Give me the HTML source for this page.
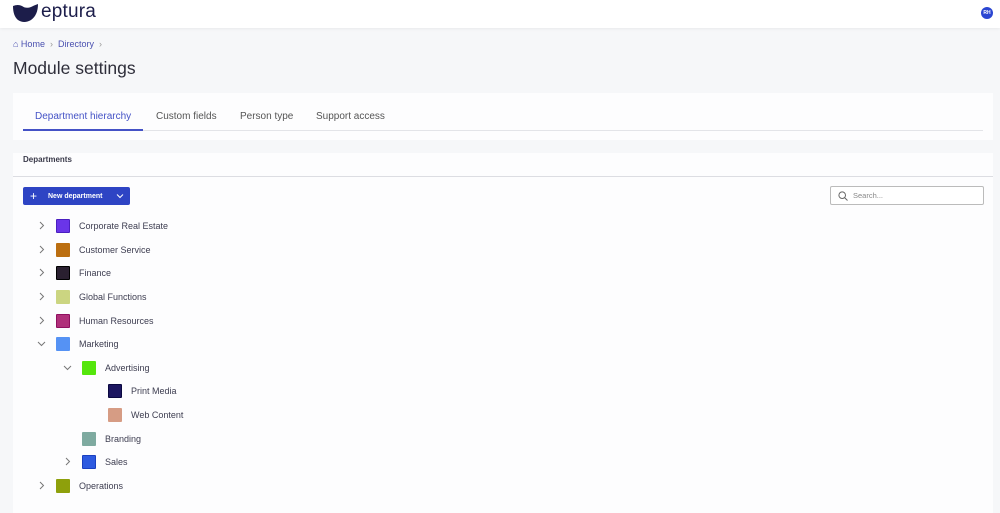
<!DOCTYPE html>
<html><head><meta charset="utf-8"><style>
*{margin:0;padding:0;box-sizing:border-box}
body{width:1000px;height:509px;overflow:hidden;background:#f6f7f9;font-family:"Liberation Sans",sans-serif;color:#3a3a4a;position:relative}
.a{position:absolute;white-space:nowrap}
.hdr{left:0;top:0;width:1000px;height:28px;background:#fff;box-shadow:0 1px 3px rgba(0,0,0,.06)}
.row{position:absolute;height:16px;font-size:9px;color:#3d3d50;line-height:16px;white-space:nowrap}
.sq{position:absolute;width:14px;height:14px;border-radius:1px;top:1px}
.chev{position:absolute;top:3px}
</style></head><body>
<div class="a hdr">
<svg class="a" style="left:12px;top:3px" width="27" height="20" viewBox="0 0 27 20"><path d="M1 3 Q6 1 10 3 Q14 6 19 4 Q23 2 26 1 Q26 12 19 17 Q12 21 6 17 Q1 13 1 3Z" fill="#1c1d4a"/></svg>
<div class="a" style="left:41px;top:1px;font-size:19px;color:#1c1d4a;letter-spacing:.2px">eptura</div>
<div class="a" style="left:981px;top:7px;width:12px;height:12px;border-radius:50%;background:#2b46d2;color:#fff;font-size:5px;font-weight:bold;text-align:center;line-height:12px">RH</div>
</div>
<div class="a" style="left:13px;top:39px;font-size:9px;color:#4a50b0">⌂ Home &nbsp;<span style="color:#999">›</span>&nbsp; Directory &nbsp;<span style="color:#999">›</span></div>
<div class="a" style="left:13px;top:58px;font-size:17.5px;color:#2e2e3a">Module settings</div>
<div class="a" style="left:13px;top:93px;width:980px;height:47px;background:#fdfdfe"></div>
<div class="a" style="left:23px;top:130px;width:960px;height:1px;background:#e3e4e8"></div>
<div class="a" style="left:23px;top:129px;width:120px;height:2px;background:#4452c6"></div>
<div class="a" style="left:35px;top:111px;font-size:10px;color:#4452c6">Department hierarchy</div>
<div class="a" style="left:156px;top:111px;font-size:10px;color:#555">Custom fields</div>
<div class="a" style="left:240px;top:111px;font-size:10px;color:#555">Person type</div>
<div class="a" style="left:316px;top:111px;font-size:10px;color:#555">Support access</div>
<div class="a" style="left:13px;top:153px;width:980px;height:360px;background:#fdfdfe"></div>
<div class="a" style="left:13px;top:176px;width:980px;height:1px;background:#dcdde2"></div>
<div class="a" style="left:23px;top:155px;font-size:8px;font-weight:bold;color:#3a3a4a">Departments</div>
<div class="a" style="left:23px;top:187px;width:107px;height:18px;background:#2e44c4;border-radius:2px;color:#fff;font-size:7px;font-weight:bold">
<span class="a" style="left:7px;top:1px;font-size:12px;font-weight:normal;line-height:16px">+</span><span class="a" style="left:25px;top:5px;line-height:9px">New department</span>
<svg class="a" style="left:93px;top:6px" width="8" height="6" viewBox="0 0 8 6"><path d="M1 1.5L4 4.5L7 1.5" stroke="#fff" fill="none"/></svg></div>
<div class="a" style="left:830px;top:186px;width:154px;height:19px;border:1px solid #bbb;border-radius:2px;background:#fff">
<svg class="a" style="left:7px;top:4px" width="10" height="10" viewBox="0 0 10 10"><circle cx="4.2" cy="4.2" r="3.3" stroke="#666" fill="none"/><path d="M6.6 6.6L9.5 9.5" stroke="#666"/></svg>
<span class="a" style="left:22px;top:4px;font-size:7.5px;color:#888">Search...</span></div>

<div class="row" style="left:0;top:218px"><svg class="chev" style="left:39px" width="6" height="9" viewBox="0 0 6 9"><path d="M1 1L4.5 4.5L1 8" stroke="#777" fill="none"/></svg><div class="sq" style="left:56px;background:#6a35e8;border:1px solid #4a1fc0"></div><span class="a" style="left:79px">Corporate Real Estate</span></div>
<div class="row" style="left:0;top:242px"><svg class="chev" style="left:39px" width="6" height="9" viewBox="0 0 6 9"><path d="M1 1L4.5 4.5L1 8" stroke="#777" fill="none"/></svg><div class="sq" style="left:56px;background:#bb6e10"></div><span class="a" style="left:79px">Customer Service</span></div>
<div class="row" style="left:0;top:265px"><svg class="chev" style="left:39px" width="6" height="9" viewBox="0 0 6 9"><path d="M1 1L4.5 4.5L1 8" stroke="#777" fill="none"/></svg><div class="sq" style="left:56px;background:#2a2030;border:1px solid #000"></div><span class="a" style="left:79px">Finance</span></div>
<div class="row" style="left:0;top:289px"><svg class="chev" style="left:39px" width="6" height="9" viewBox="0 0 6 9"><path d="M1 1L4.5 4.5L1 8" stroke="#777" fill="none"/></svg><div class="sq" style="left:56px;background:#cbd581"></div><span class="a" style="left:79px">Global Functions</span></div>
<div class="row" style="left:0;top:313px"><svg class="chev" style="left:39px" width="6" height="9" viewBox="0 0 6 9"><path d="M1 1L4.5 4.5L1 8" stroke="#777" fill="none"/></svg><div class="sq" style="left:56px;background:#b0307a;border:1px solid #901060"></div><span class="a" style="left:79px">Human Resources</span></div>
<div class="row" style="left:0;top:336px"><svg class="chev" style="left:37px;top:5px" width="9" height="6" viewBox="0 0 9 6"><path d="M1 1L4.5 4.5L8 1" stroke="#777" fill="none"/></svg><div class="sq" style="left:56px;background:#5592f4"></div><span class="a" style="left:79px">Marketing</span></div>
<div class="row" style="left:0;top:360px"><svg class="chev" style="left:63px;top:5px" width="9" height="6" viewBox="0 0 9 6"><path d="M1 1L4.5 4.5L8 1" stroke="#777" fill="none"/></svg><div class="sq" style="left:82px;background:#55e60c"></div><span class="a" style="left:105px">Advertising</span></div>
<div class="row" style="left:0;top:383px"><div class="sq" style="left:108px;background:#1c1660;border:1px solid #0a0840"></div><span class="a" style="left:131px">Print Media</span></div>
<div class="row" style="left:0;top:407px"><div class="sq" style="left:108px;background:#d69c84"></div><span class="a" style="left:131px">Web Content</span></div>
<div class="row" style="left:0;top:431px"><div class="sq" style="left:82px;background:#7eaaa0"></div><span class="a" style="left:105px">Branding</span></div>
<div class="row" style="left:0;top:454px"><svg class="chev" style="left:65px" width="6" height="9" viewBox="0 0 6 9"><path d="M1 1L4.5 4.5L1 8" stroke="#777" fill="none"/></svg><div class="sq" style="left:82px;background:#2d5ae0;border:1px solid #1a40c0"></div><span class="a" style="left:105px">Sales</span></div>
<div class="row" style="left:0;top:478px"><svg class="chev" style="left:39px" width="6" height="9" viewBox="0 0 6 9"><path d="M1 1L4.5 4.5L1 8" stroke="#777" fill="none"/></svg><div class="sq" style="left:56px;background:#8ea00c"></div><span class="a" style="left:79px">Operations</span></div>
</body></html>
